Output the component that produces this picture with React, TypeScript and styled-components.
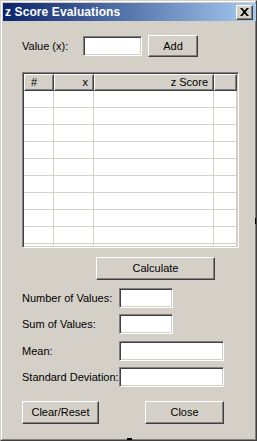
import React from "react";
import styled, { createGlobalStyle } from "styled-components";

const Global = createGlobalStyle`
  html, body { margin: 0; padding: 0; background: #d4d0c8; }
  * { box-sizing: border-box; }
`;

const FACE = "#d4d0c8";
const SHADOW = "#808080";
const DARK = "#404040";

const Window = styled.div`
  position: relative;
  width: 257px;
  height: 441px;
  background: ${FACE};
  border-style: solid;
  border-width: 1px 1px 1px 1px;
  border-color: ${FACE} ${DARK} ${DARK} ${FACE};
  font-family: "Liberation Sans", Arial, sans-serif;
  font-size: 11px;
  color: #000;
  overflow: hidden;
`;

const Inner = styled.div`
  height: 100%;
  border-style: solid;
  border-width: 1px;
  border-color: #fff ${SHADOW} ${SHADOW} #fff;
  padding: 1px;
  display: flex;
  flex-direction: column;
`;

const TitleBar = styled.div`
  height: 18px;
  display: flex;
  align-items: center;
  justify-content: space-between;
  padding: 0 2px 0 2px;
  background: linear-gradient(to right, #0a246a, #a6caf0);
  margin-right: -2px;
`;

const Title = styled.span`
  color: #fff;
  font-weight: bold;
  font-size: 12px;
  letter-spacing: 0.1px;
`;

const Raised = styled.button`
  font-family: "Liberation Sans", Arial, sans-serif;
  font-size: 11px;
  color: #000;
  background: ${FACE};
  padding: 0;
  margin: 0;
  border-style: solid;
  border-width: 1px;
  border-color: #fff ${DARK} ${DARK} #fff;
  box-shadow: inset -1px -1px 0 ${SHADOW};
  display: flex;
  align-items: center;
  justify-content: center;
`;

const CloseBtn = styled(Raised)`
  width: 17px;
  height: 15px;
  margin-right: 1px;
  padding: 0 1px 1px 0;
`;

const Button = styled(Raised)<{ $w: number; $h: number }>`
  width: ${(p) => p.$w}px;
  height: ${(p) => p.$h}px;
  padding-bottom: 1px;
`;

const Content = styled.div`
  display: flex;
  flex-direction: column;
  padding-left: 19px;
`;

const Row = styled.div<{ $mt: number }>`
  display: flex;
  align-items: center;
  margin-top: ${(p) => p.$mt}px;
`;

const Label = styled.span<{ $w: number }>`
  width: ${(p) => p.$w}px;
  flex: none;
`;

const Field = styled.div<{ $w: number; $h?: number }>`
  width: ${(p) => p.$w}px;
  height: ${(p) => p.$h ?? 20}px;
  background: #fff;
  border-style: solid;
  border-width: 1px;
  border-color: ${SHADOW} #fff #fff ${SHADOW};
  box-shadow: inset 1px 1px 0 ${DARK}, inset -1px -1px 0 ${FACE};
  flex: none;
`;

const Table = styled.div`
  width: 217px;
  height: 176px;
  margin-top: 15px;
  border-style: solid;
  border-width: 1px;
  border-color: ${SHADOW} #fff #fff ${SHADOW};
  box-shadow: inset 1px 1px 0 ${DARK}, inset -1px -1px 0 ${FACE};
  padding: 1px;
  background: #fff;
  overflow: hidden;
`;

const Grid = styled.div`
  display: grid;
  grid-template-columns: 30px 40px 120px 23px;
`;

const Head = styled.div<{ $align: string }>`
  height: 17px;
  background: ${FACE};
  border-style: solid;
  border-width: 1px;
  border-color: #fff ${DARK} ${DARK} #fff;
  box-shadow: inset -1px -1px 0 ${SHADOW};
  display: flex;
  align-items: center;
  justify-content: ${(p) => p.$align};
  padding: 0 5px 1px 6px;
`;

const Cell = styled.div`
  height: 17px;
  border-right: 1px solid ${FACE};
  border-bottom: 1px solid ${FACE};
`;

const Mark = styled.div<{ $x: number; $y: number; $w: number; $h: number }>`
  position: absolute;
  left: ${(p) => p.$x}px;
  top: ${(p) => p.$y}px;
  width: ${(p) => p.$w}px;
  height: ${(p) => p.$h}px;
  background: #000;
`;

const cols = [0, 1, 2, 3];
const rows = Array.from({ length: 10 }, (_, i) => i);

export default function App() {
  return (
    <>
      <Global />
      <Window>
        <Inner>
          <TitleBar>
            <Title>z Score Evaluations</Title>
            <CloseBtn aria-label="Close">
              <svg width="9" height="8" viewBox="0 0 9 8">
                <path d="M0 0 L2.2 0 L4.5 2.6 L6.8 0 L9 0 L5.6 4 L9 8 L6.8 8 L4.5 5.4 L2.2 8 L0 8 L3.4 4 Z" fill="#000" />
              </svg>
            </CloseBtn>
          </TitleBar>
          <Content>
            <Row $mt={14}>
              <Label $w={61}>Value (x):</Label>
              <Field $w={59} />
              <Button $w={50} $h={22} style={{ marginLeft: 6 }}>Add</Button>
            </Row>
            <Table>
              <Grid>
                <Head $align="flex-start">#</Head>
                <Head $align="flex-end">x</Head>
                <Head $align="flex-end">z Score</Head>
                <Head $align="flex-end"></Head>
                {rows.map((r) => cols.map((c) => <Cell key={`${r}-${c}`} />))}
              </Grid>
            </Table>
            <Row $mt={9} style={{ paddingLeft: 74 }}>
              <Button $w={119} $h={23}>Calculate</Button>
            </Row>
            <Row $mt={8}>
              <Label $w={97}>Number of Values:</Label>
              <Field $w={54} />
            </Row>
            <Row $mt={6}>
              <Label $w={97}>Sum of Values:</Label>
              <Field $w={54} />
            </Row>
            <Row $mt={7}>
              <Label $w={97}>Mean:</Label>
              <Field $w={105} />
            </Row>
            <Row $mt={6}>
              <Label $w={97}>Standard Deviation:</Label>
              <Field $w={105} />
            </Row>
            <Row $mt={14}>
              <Button $w={77} $h={23}>Clear/Reset</Button>
              <Button $w={79} $h={23} style={{ marginLeft: 46 }}>Close</Button>
            </Row>
          </Content>
        </Inner>
        <Mark $x={254} $y={217} $w={2} $h={6} />
        <Mark $x={126} $y={437} $w={5} $h={3} />
      </Window>
    </>
  );
}
